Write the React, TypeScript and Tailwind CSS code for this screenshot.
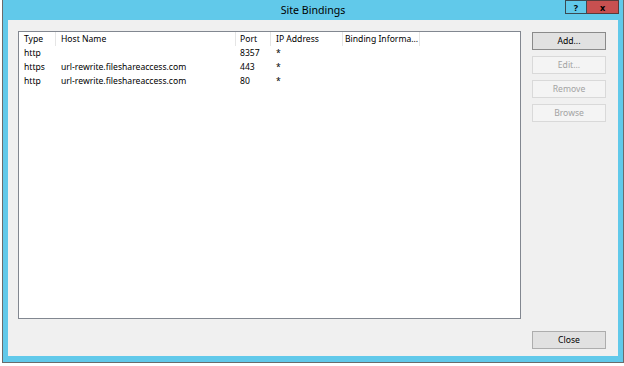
import React from "react";

const cols = [
  { w: "w-[37px]", label: "Type", pl: "pl-[5px]" },
  { w: "w-[180px]", label: "Host Name", pl: "pl-[5px]" },
  { w: "w-[35px]", label: "Port", pl: "pl-[4px]" },
  { w: "w-[72px]", label: "IP Address", pl: "pl-[5px]" },
  { w: "w-[77px]", label: "Binding Informa...", pl: "pl-[2px]" },
];

const rows = [
  ["http", "", "8357", "*", ""],
  ["https", "url-rewrite.fileshareaccess.com", "443", "*", ""],
  ["http", "url-rewrite.fileshareaccess.com", "80", "*", ""],
];

function Btn({ label, disabled, focused }: { label: string; disabled?: boolean; focused?: boolean }) {
  return (
    <div
      className={
        "h-[18px] w-[74px] flex items-center justify-center text-[8.6px] leading-none border " +
        (disabled
          ? "bg-[#f4f4f4] border-[#d9d9d9] text-[#a3a3a3]"
          : focused
          ? "bg-[#e1e1e1] border-[#8a8a8a] text-black"
          : "bg-[#e1e1e1] border-[#adadad] text-black")
      }
    >
      {label}
    </div>
  );
}

export default function App() {
  return (
    <div
      className="w-[624px] h-[366px] bg-white pl-[2px] overflow-hidden"
      style={{ fontFamily: '"Noto Sans", "Open Sans", sans-serif' }}
    >
      <div className="w-[622px] h-[363px] bg-[#61c9ea] border-l border-r border-b border-[#6b6b6b] flex flex-col">
        <div className="relative h-[20px] flex items-center justify-center">
          <span className="text-[10.6px] text-black leading-none">Site Bindings</span>
          <div className="absolute right-[4px] top-0 flex">
            <div className="w-[22px] h-[14px] border border-[#3a4a52] bg-[#61c9ea] flex items-center justify-center text-[9px] font-bold leading-none text-black">
              ?
            </div>
            <div className="w-[32px] h-[14px] border border-l-0 border-[#5a3a3a] bg-[#c75050] flex items-center justify-center text-[9px] font-bold leading-none text-black">
              x
            </div>
          </div>
        </div>
        <div className="mx-[5px] h-[336px] bg-[#f0f0f0] flex pt-[11px] pl-[10px] pb-[7px]">
          <div className="w-[503px] h-[288px] bg-white border border-[#828790] text-[8.6px] text-black">
            <div className="flex h-[14px]">
              {cols.map((c) => (
                <div key={c.label} className={c.w + " " + c.pl + " border-r border-[#e5e5e5] leading-[14px] whitespace-nowrap overflow-hidden"}>
                  {c.label}
                </div>
              ))}
            </div>
            {rows.map((r, i) => (
              <div key={i} className="flex h-[14px]">
                {r.map((v, j) => (
                  <div key={j} className={cols[j].w + " " + cols[j].pl + " leading-[14px] whitespace-nowrap"}>
                    {v}
                  </div>
                ))}
              </div>
            ))}
          </div>
          <div className="ml-[11px] w-[74px] flex flex-col pt-[1px]">
            <div className="flex flex-col gap-[6px]">
              <Btn label="Add..." focused />
              <Btn label="Edit..." disabled />
              <Btn label="Remove" disabled />
              <Btn label="Browse" disabled />
            </div>
            <div className="mt-auto">
              <Btn label="Close" />
            </div>
          </div>
        </div>
      </div>
    </div>
  );
}
